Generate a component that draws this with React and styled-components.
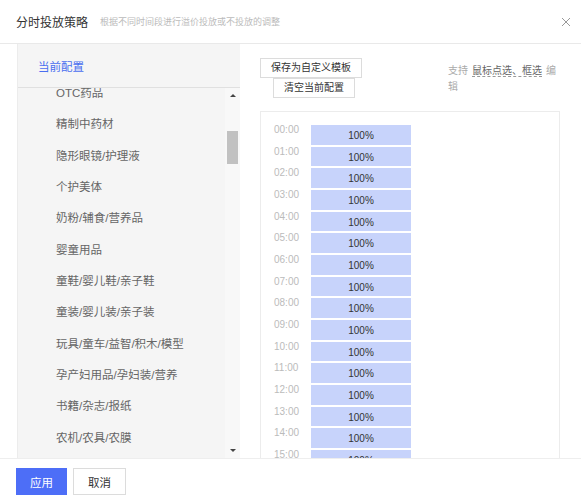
import React, { useLayoutEffect, useRef } from 'react';
import styled, { createGlobalStyle } from 'styled-components';

const Global = createGlobalStyle`
  html, body { margin: 0; padding: 0; background: #fff; }
  body { font-family: "Liberation Sans", "Noto Sans CJK SC", sans-serif; }
  * { box-sizing: border-box; }
`;

const Dialog = styled.div`
  width: 581px;
  height: 500px;
  display: flex;
  flex-direction: column;
  overflow: hidden;
  background: #fff;
`;

const Header = styled.div`
  height: 44px;
  flex-shrink: 0;
  border-bottom: 1px solid #e9e9e9;
  display: flex;
  align-items: center;
  padding: 0 10px 0 16px;
`;

const Title = styled.div`
  font-size: 12px;
  color: #333;
`;

const Subtitle = styled.div`
  font-size: 9px;
  color: #bbb;
  margin-left: 12px;
  flex: 1;
`;

const CloseBtn = styled.button`
  border: 0;
  background: none;
  padding: 0;
  width: 10px;
  height: 10px;
  display: flex;
  align-items: center;
  justify-content: center;
  cursor: pointer;
`;

const Body = styled.div`
  flex: 1;
  min-height: 0;
  display: flex;
  gap: 20px;
  padding-left: 17px;
  overflow: hidden;
`;

const Side = styled.div`
  width: 223px;
  flex-shrink: 0;
  background: #f5f5f5;
  border-left: 1px solid #ececec;
  display: flex;
  flex-direction: column;
`;

const SideHead = styled.div`
  height: 44px;
  flex-shrink: 0;
  border-bottom: 1px solid #e0e0e0;
  display: flex;
  align-items: center;
  padding-left: 20px;
  color: #4a6ef0;
  font-size: 11.5px;
`;

const SideBody = styled.div`
  flex: 1;
  min-height: 0;
  display: flex;
`;

const List = styled.div`
  flex: 1;
  overflow: hidden;
`;

const Item = styled.div`
  height: 31.33px;
  line-height: 31.33px;
  padding-left: 38px;
  font-size: 11.5px;
  color: #666;
  white-space: nowrap;
`;

const ScrollBar = styled.div`
  width: 15px;
  flex-shrink: 0;
  background: #f8f8f8;
  display: flex;
  flex-direction: column;
`;

const ArrowBtn = styled.div`
  height: 15px;
  flex-shrink: 0;
  display: flex;
  align-items: center;
  justify-content: center;
  &::after {
    content: '';
    width: 0;
    height: 0;
    border-left: 3px solid transparent;
    border-right: 3px solid transparent;
    ${p => (p.$down ? 'border-top: 3px solid #444;' : 'border-bottom: 3px solid #444;')}
  }
`;

const Track = styled.div`
  flex: 1;
  padding: 28px 2px 0 2px;
`;

const Thumb = styled.div`
  height: 33px;
  background: #c1c1c1;
`;

const Main = styled.div`
  width: 300px;
  flex-shrink: 0;
  padding-top: 14px;
  overflow: hidden;
  display: flex;
  flex-direction: column;
`;

const Toolbar = styled.div`
  display: flex;
  align-items: flex-start;
  height: 40px;
  flex-shrink: 0;
`;

const BtnGroup = styled.div`
  display: flex;
  flex-direction: column;
  align-items: flex-start;
`;

const ToolBtn = styled.button`
  height: 20px;
  padding: 0 10px;
  margin-left: ${p => p.$indent || 0}px;
  border: 1px solid #dcdcdc;
  background: #fff;
  color: #333;
  font-family: inherit;
  font-size: 10px;
  line-height: 18px;
  cursor: pointer;
`;

const Note = styled.div`
  margin-left: auto;
  width: 112px;
  padding-top: 5px;
  font-size: 10px;
  line-height: 16px;
  color: #aaa;
`;

const Strong = styled.span`
  color: #666;
  border-bottom: 1px dashed #999;
  margin: 0 4px;
`;

const Grid = styled.div`
  margin-top: 13px;
  border: 1px solid #ececec;
  padding: 13px 0 0 13px;
  flex-shrink: 0;
`;

const Row = styled.div`
  display: flex;
  align-items: flex-start;
  height: 19.67px;
  margin-bottom: 2px;
`;

const TimeLabel = styled.div`
  width: 37px;
  font-size: 10px;
  line-height: 10px;
  color: #bbb;
`;

const Cell = styled.div`
  width: 100px;
  height: 100%;
  background: #c7d3fb;
  color: #333;
  font-size: 10px;
  line-height: 22px;
  text-align: center;
`;

const Footer = styled.div`
  height: 42px;
  flex-shrink: 0;
  border-top: 1px solid #eee;
  display: flex;
  align-items: flex-start;
  gap: 6px;
  padding: 9px 16px 0;
`;

const FootBtn = styled.button`
  height: 27px;
  width: ${p => p.$w}px;
  border: 1px solid ${p => (p.$primary ? '#4d6ef7' : '#dcdcdc')};
  background: ${p => (p.$primary ? '#4d6ef7' : '#fff')};
  color: ${p => (p.$primary ? '#fff' : '#333')};
  font-family: inherit;
  font-size: 11.5px;
  padding: 0;
  cursor: pointer;
`;

const categories = [
  'OTC药品',
  '精制中药材',
  '隐形眼镜/护理液',
  '个护美体',
  '奶粉/辅食/营养品',
  '婴童用品',
  '童鞋/婴儿鞋/亲子鞋',
  '童装/婴儿装/亲子装',
  '玩具/童车/益智/积木/模型',
  '孕产妇用品/孕妇装/营养',
  '书籍/杂志/报纸',
  '农机/农具/农膜',
  '宠物/宠物食品及用品',
];

const hours = Array.from({ length: 16 }, (_, i) => `${String(i).padStart(2, '0')}:00`);

export default function App() {
  const listRef = useRef(null);
  useLayoutEffect(() => {
    if (listRef.current) listRef.current.scrollTop = 10;
  }, []);

  return (
    <Dialog>
      <Global />
      <Header>
        <Title>分时投放策略</Title>
        <Subtitle>根据不同时间段进行溢价投放或不投放的调整</Subtitle>
        <CloseBtn aria-label="关闭">
          <svg width="10" height="10" viewBox="0 0 10 10">
            <path d="M1 1L9 9M9 1L1 9" stroke="#999" strokeWidth="1" />
          </svg>
        </CloseBtn>
      </Header>
      <Body>
        <Side>
          <SideHead>当前配置</SideHead>
          <SideBody>
            <List ref={listRef}>
              {categories.map(c => (
                <Item key={c}>{c}</Item>
              ))}
            </List>
            <ScrollBar>
              <ArrowBtn />
              <Track>
                <Thumb />
              </Track>
              <ArrowBtn $down />
            </ScrollBar>
          </SideBody>
        </Side>
        <Main>
          <Toolbar>
            <BtnGroup>
              <ToolBtn>保存为自定义模板</ToolBtn>
              <ToolBtn $indent={13}>清空当前配置</ToolBtn>
            </BtnGroup>
            <Note>
              支持<Strong>鼠标点选、框选</Strong>编辑
            </Note>
          </Toolbar>
          <Grid>
            {hours.map(h => (
              <Row key={h}>
                <TimeLabel>{h}</TimeLabel>
                <Cell>100%</Cell>
              </Row>
            ))}
          </Grid>
        </Main>
      </Body>
      <Footer>
        <FootBtn $primary $w={51}>应用</FootBtn>
        <FootBtn $w={53}>取消</FootBtn>
      </Footer>
    </Dialog>
  );
}
